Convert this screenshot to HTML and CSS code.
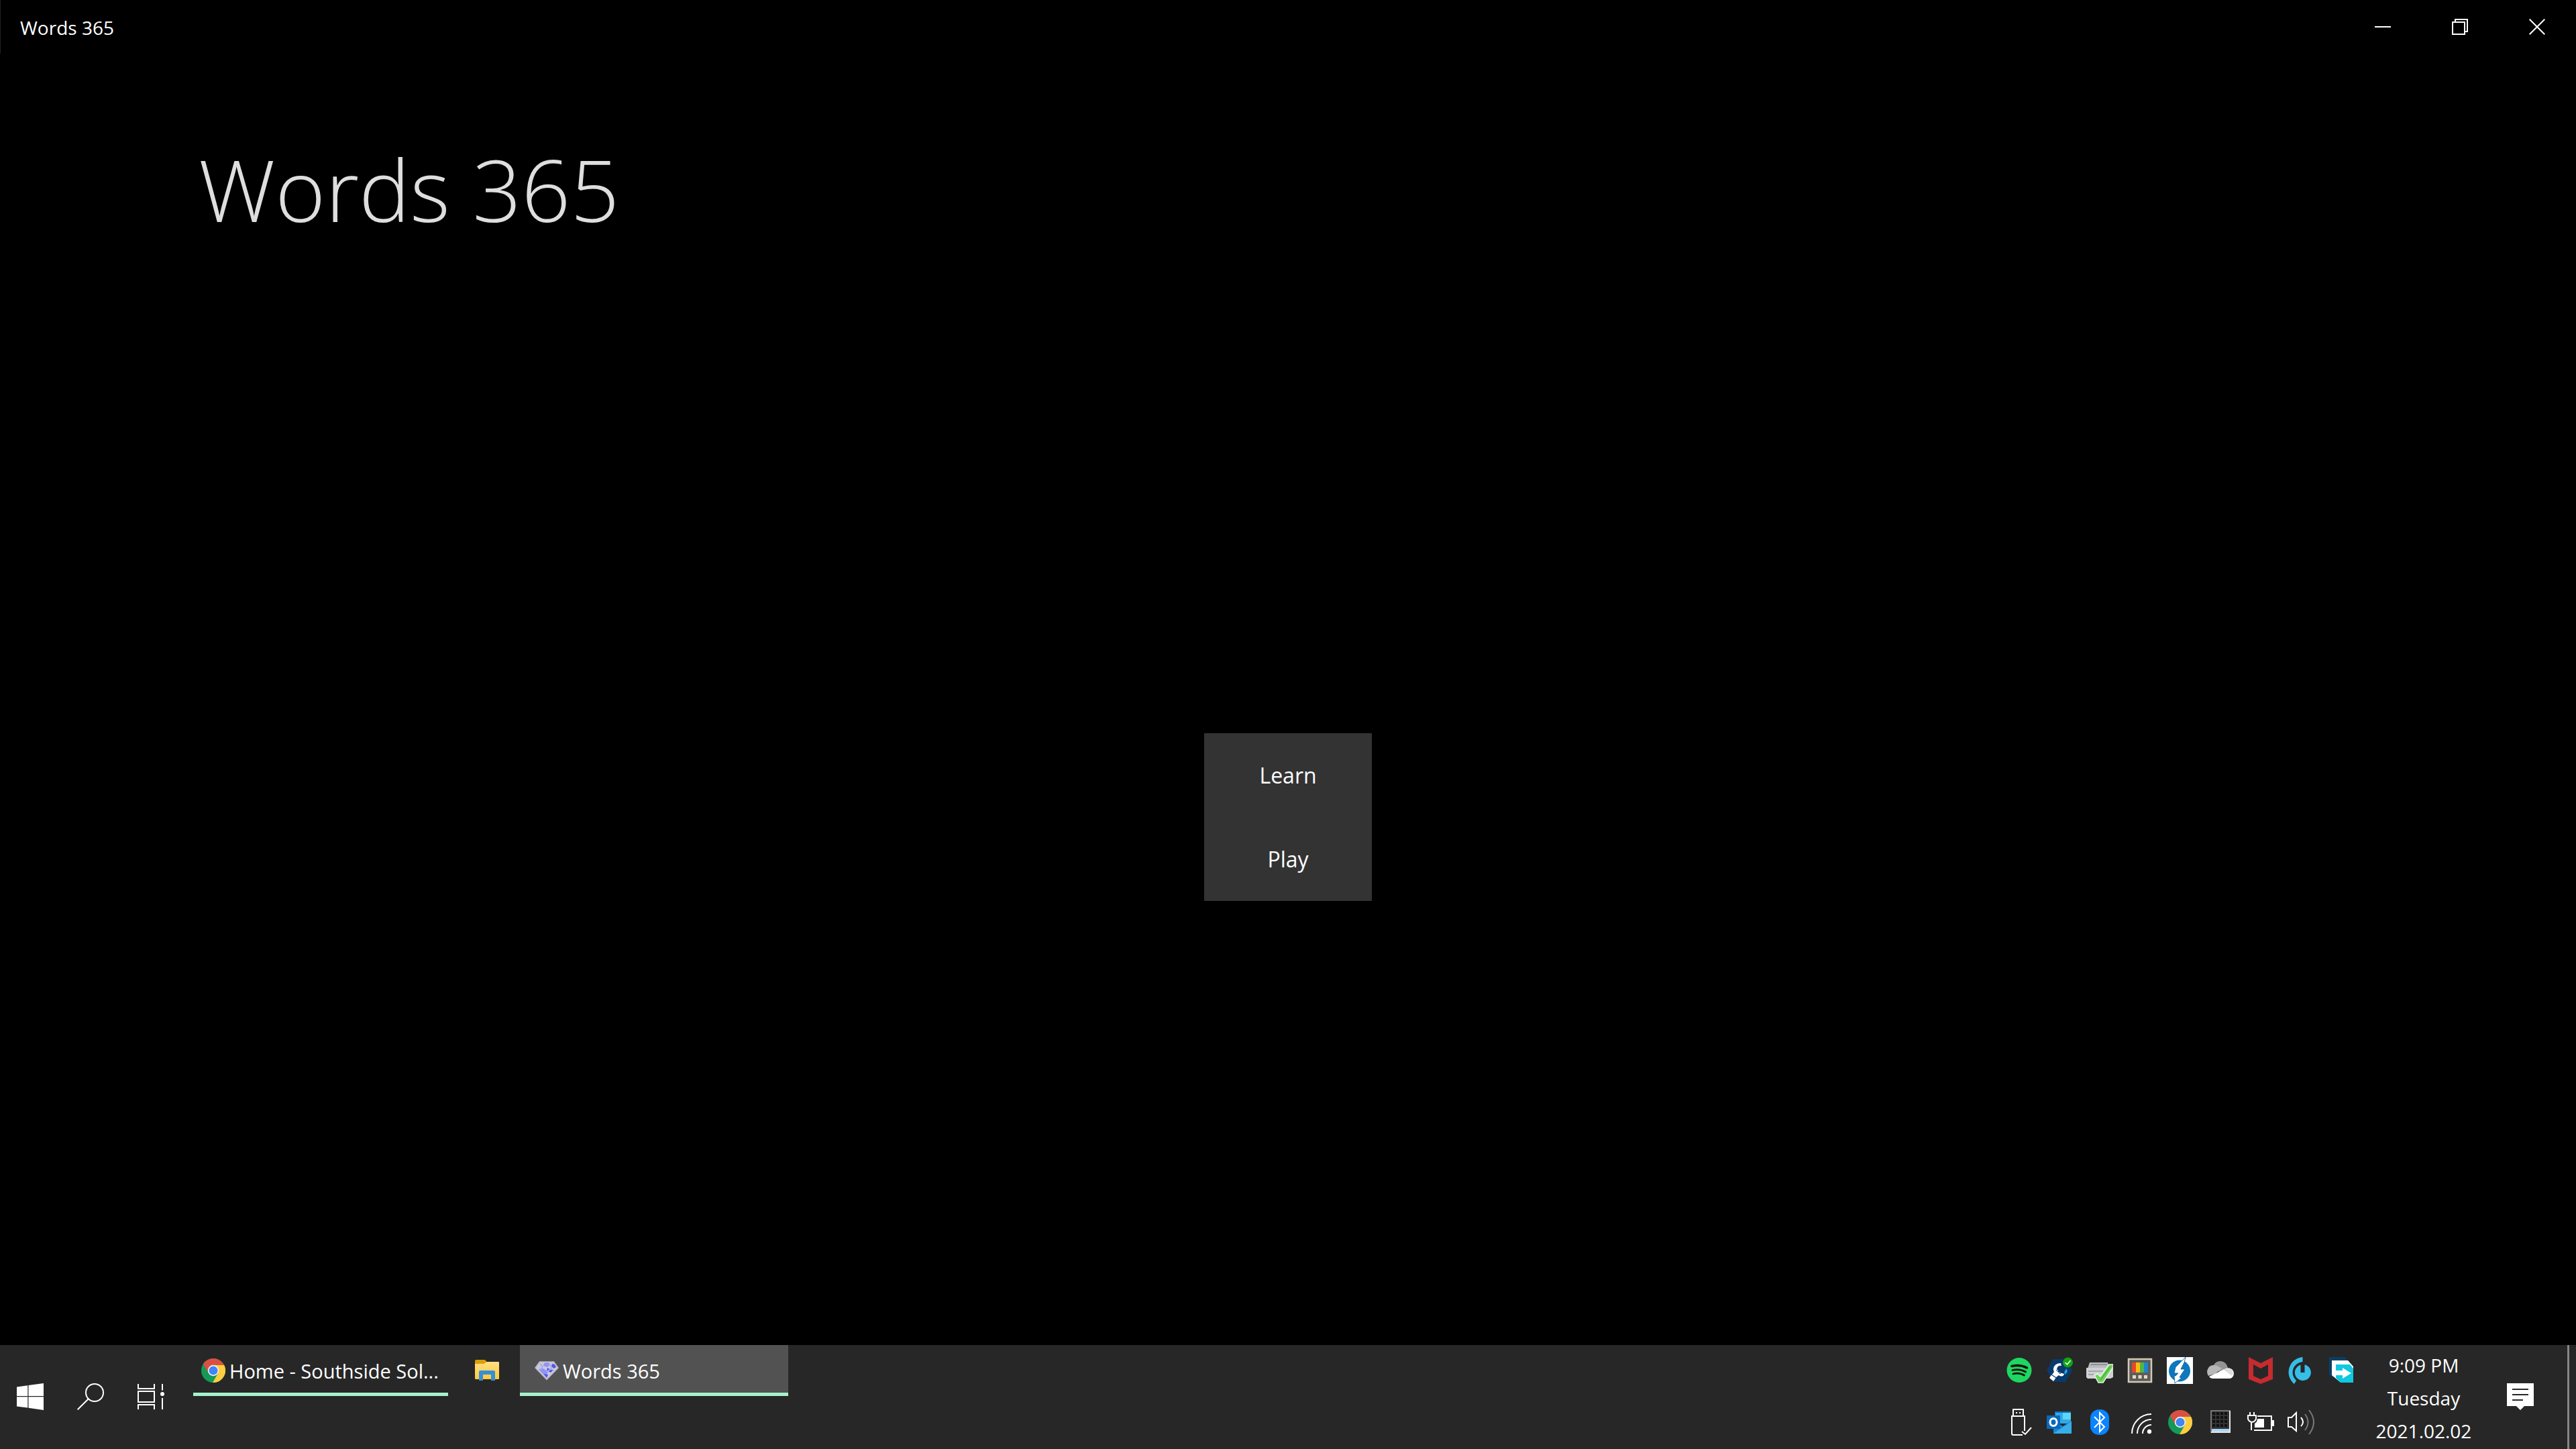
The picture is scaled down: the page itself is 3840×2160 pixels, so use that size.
FILE: index.html
```html
<!DOCTYPE html>
<html lang="en">
<head>
<meta charset="utf-8">
<title>Words 365</title>
<link rel="stylesheet" href="styles.css">
</head>
<body>
<svg class="defs" aria-hidden="true">
  <symbol id="chrome" viewBox="0 0 48 48">
    <circle cx="24" cy="24" r="24" fill="#159957"/>
    <path fill="#ffcd40" d="M24 13.1H45.4A24 24 0 0 1 22.75 48L33.4 29.45Z"/>
    <path fill="#db4f43" d="M24 13.1H45.4A24 24 0 0 0 3.9 10.9L14.56 29.45L24 24Z"/>
    <circle cx="24" cy="24" r="10.9" fill="#f1f1f1"/>
    <circle cx="24" cy="24" r="8.7" fill="#4285f4"/>
  </symbol>
</svg>

<div class="app">
  <header class="titlebar">
    <span class="titlebar-text">Words 365</span>
    <div class="caption-buttons">
      <button type="button" class="caption" aria-label="Minimize"><svg width="24" height="24" viewBox="0 0 24 24"><path d="M0 12H24" class="line"/></svg></button>
      <button type="button" class="caption" aria-label="Restore"><svg width="24" height="24" viewBox="0 0 24 24"><path d="M1 5H19V23H1ZM5 5V1H23V19H19" class="line"/></svg></button>
      <button type="button" class="caption" aria-label="Close"><svg width="24" height="24" viewBox="0 0 24 24"><path d="M.7.7L23.3 23.3M23.3.7L.7 23.3" class="line"/></svg></button>
    </div>
  </header>

  <main class="page">
    <h1 class="page-title">Words 365</h1>
    <nav class="menu">
      <div class="menu-items">
        <button type="button" class="menu-button">Learn</button>
        <button type="button" class="menu-button">Play</button>
      </div>
    </nav>
  </main>
</div>

<footer class="taskbar">
  <div class="system">
    <button type="button" class="system-button" aria-label="Start"><svg width="40" height="40" viewBox="0 0 40 40"><path fill="#fff" d="M0 5.6L16.3 3.3V18.9H0ZM17.5 3.1L40 0V18.9H17.5ZM0 20.3H16.3V36.6L0 34.4ZM17.5 20.3H40V40L17.5 36.8Z"/></svg></button>
    <button type="button" class="system-button" aria-label="Search"><svg width="40" height="40" viewBox="0 0 40 40"><circle cx="26" cy="14" r="13" class="line"/><path d="M16.8 23.2L.7 39.3" class="line"/></svg></button>
    <button type="button" class="system-button" aria-label="Task View"><svg width="40" height="40" viewBox="0 0 40 40"><path class="line" d="M1 1V8H25V1M1 12H25V28H1ZM1 39V32H25V39M37 1V10.500M37 22V39"/><circle cx="37" cy="16" r="3" fill="#fff"/></svg></button>
  </div>

  <div class="tasks">
    <button type="button" class="task open"><svg width="36" height="36"><use href="#chrome"/></svg><span>Home - Southside Sol...</span></button>
    <button type="button" class="pin" aria-label="File Explorer">
      <svg width="36" height="36" viewBox="0 0 36 36">
        <defs><linearGradient id="folder" x2="0" y2="1"><stop stop-color="#ffe083"/><stop offset="1" stop-color="#ffca3c"/></linearGradient></defs>
        <path fill="#dd9e08" d="M0 4Q0 2 2 2H14Q16 2 18 6L14 9H0Z"/>
        <path fill="url(#folder)" d="M0 8H13L18 5H35Q36 5 36 6V30Q36 31 35 31H1Q0 31 0 30Z"/>
        <path fill="#368fd6" d="M6 33V20Q6 18 8 18H28Q30 18 30 20V33H24V24H12V33Z"/>
      </svg>
    </button>
    <button type="button" class="task open active">
      <svg width="36" height="36" viewBox="0 0 36 36">
        <path fill="#c9c8e2" stroke="#b9b9c0" stroke-width="1.500" d="M7.500 5H28.500L35 14L18 31.500L1 14Z"/>
        <path fill="#8f93f4" d="M14 7Q22 5 23 9L19 13L13 11ZM6 16L13 15L20 20L18 24L12 23Z"/>
        <path fill="#4f55ee" d="M26 8L30 9L32 13L28 15L25 11ZM19 14L25 17L28 17L24 21L18 18ZM13 23L20 24L18 29Z"/>
        <path fill="none" stroke="#aaaadf" stroke-width="2" d="M8 8L12 12L9 16M20 10Q26 11 25 15L18 20"/>
      </svg>
      <span>Words 365</span>
    </button>
  </div>

  <div class="tray">
    <button type="button" class="tray-icon" aria-label="Spotify"><svg width="40" height="40" viewBox="0 0 40 40"><circle cx="20" cy="19.500" r="18.500" fill="#1ed760"/><path fill="none" stroke="#10140f" stroke-linecap="round" stroke-width="3.500" d="M9 13.500Q21 10.500 31.500 16"/><path fill="none" stroke="#10140f" stroke-linecap="round" stroke-width="2.800" d="M10 19.500Q20.500 17 29.500 22M11 25Q20 22.500 27.500 27"/></svg></button>
    <button type="button" class="tray-icon" aria-label="Support tool"><svg width="40" height="40" viewBox="0 0 40 40"><path fill="#073b6e" d="M10 3H29L39 20L29 37H11L1 20Z"/><path fill="#fff" d="M5 31L9 25L16 29L11 36Z"/><path d="M7 25L16 31" stroke="#073b6e" stroke-width="2"/><path fill="#fff" d="M22 9C13 9 9 16 12 22L9 26L15 30L19 27C23 30 27 28 27 25L20 23L16 18Q17 12 23 13Z"/><path fill="none" stroke="#073b6e" d="M15 19L18 22L21 18M18 22L21 25L24 21"/><path fill="#27a7df" d="M27 23L30 17L32 21L29 26Z"/><circle cx="32.500" cy="8" r="7.500" fill="#13a313"/><path fill="none" stroke="#fff" stroke-width="1.500" d="M28.500 8L31.500 11L36.500 5"/></svg></button>
    <button type="button" class="tray-icon" aria-label="Safely remove drive"><svg width="40" height="40" viewBox="0 0 40 40"><path fill="#b9bbbf" d="M5 8H32L35 17H2Z"/><path fill="#d0d1d5" d="M0 16H40V30L36 32H2L0 30Z"/><path fill="#a5a7ab" d="M3 20H25V22H3ZM3 25H12V27H3Z"/><path fill="#8e9095" d="M7 10H31V12H6Z"/><path fill="#6fd35a" stroke="#e8f8e5" stroke-width="1.500" d="M12 27L17 25L21 29L34 11H40V15L25 38H18Z"/><path stroke="#4bb53f" stroke-width="2" d="M21 34L36 14"/></svg></button>
    <button type="button" class="tray-icon" aria-label="PowerToys"><svg width="40" height="40" viewBox="0 0 40 40"><rect x="3" y="3" width="34" height="34" fill="#5e5d5b" stroke="#d4c9b7" stroke-width="2.500"/><path fill="#e6492a" d="M8 8H14V23H8Z"/><path fill="#fbbc12" d="M14 8H20V23H14Z"/><path fill="#4fb648" d="M20 8H26V23H20Z"/><path fill="#1d86cf" d="M26 8H32V23H26Z"/><path fill="#e2d9c9" d="M9 27H14V32H9ZM17.500 27H22.500V32H17.500ZM26 27H31V32H26Z"/></svg></button>
    <button type="button" class="tray-icon" aria-label="Thunderbolt"><svg width="40" height="40" viewBox="0 0 40 40"><path fill="#fff" d="M0 0H39V40H0Z"/><circle cx="19" cy="20.500" r="16" fill="#0c78be"/><path fill="#fff" stroke="#0a5793" stroke-width=".8" d="M28 0L13 15L11 24H17L13 28H11L12 39L22 31L19 30L27 18H21L26 8Z"/></svg></button>
    <button type="button" class="tray-icon" aria-label="OneDrive"><svg width="40" height="40" viewBox="0 0 40 40"><path fill="#959595" d="M10 12Q13 6 20 6Q29 7 31 16L20 24Z"/><path fill="#b7b7b7" d="M2 28Q0 25 0 21Q2 12 10 12Q15 12 22 17L12 25Z"/><path fill="#fff" d="M3 29L26 18Q30 15 35 17Q40 19 40 25Q39 31 34 32H9Q5 32 3 29Z"/><path fill="#dedede" d="M22 17L37 28Q40 25 38 20Q34 15 28 17L24 19Z"/></svg></button>
    <button type="button" class="tray-icon" aria-label="McAfee"><svg width="40" height="40" viewBox="0 0 40 40"><path fill="#c52b2f" fill-rule="evenodd" d="M2 0L20 9L38 0V33L20 40L2 33ZM9 11V28L20 33L31 28V11L20 17Z"/></svg></button>
    <button type="button" class="tray-icon" aria-label="Logitech G Hub"><svg width="40" height="40" viewBox="0 0 40 40"><path fill="#35bee8" d="M22.500 0V7A16 16 0 0 0 13 35L10 40A22.500 22.500 0 0 1 22.500 0Z"/><path fill="#35bee8" d="M19.500 11.500V23H25.500V11.300A12 12 0 1 1 19.500 11.500Z"/></svg></button>
    <button type="button" class="tray-icon" aria-label="File transfer"><svg width="40" height="40" viewBox="0 0 40 40"><path fill="#0a3f62" d="M2 0H25L31 6L7 31L2 26Z"/><path fill="#fff" d="M6 5H30L38 14V37H18L6 27Z"/><path fill="#10c8df" d="M12 11H33L38 17V38H19L12 31V27H22V32L35 24L22 16V20H12Z"/></svg></button>

    <button type="button" class="tray-icon" aria-label="USB device"><svg width="40" height="40" viewBox="0 0 40 40"><path class="line" d="M11 11V1H26V11M25 39H11Q9 39 9 37V11H28V33M24 34L29 38L38 28"/><path fill="#fff" d="M15 5H17V7H15ZM20 5H22V7H20Z"/></svg></button>
    <button type="button" class="tray-icon" aria-label="Outlook"><svg width="40" height="40" viewBox="0 0 40 40"><path fill="#126cb8" d="M13 4H37V16H13Z"/><path fill="#32a9e7" d="M14 6H37V22H14Z"/><path fill="#5bd5fa" d="M25 6H37V16H25Z"/><path fill="#1688d6" d="M11 18L25 26L38 18V37H11Z"/><path fill="#38aee9" d="M11 37L38 19V37Z"/><path fill="#0869bd" d="M1 10H21V30H1Z"/><ellipse cx="11" cy="20" rx="5" ry="5.500" fill="none" stroke="#fff" stroke-width="3"/></svg></button>
    <button type="button" class="tray-icon" aria-label="Bluetooth"><svg width="40" height="40" viewBox="0 0 40 40"><rect x="6" y="1" width="28" height="38" rx="13" fill="#0a84ff"/><path class="line" d="M12 12L27 27L20 34V6L27 13L12 28"/></svg></button>
    <button type="button" class="tray-icon" aria-label="Network"><svg width="40" height="40" viewBox="0 0 40 40"><path class="line" d="M8 37A29 29 0 0 1 37 8M16 37A21 21 0 0 1 37 16M24 37A13 13 0 0 1 37 24"/><circle cx="34" cy="34" r="3.200" fill="#fff"/></svg></button>
    <button type="button" class="tray-icon" aria-label="Chrome"><svg width="36" height="36"><use href="#chrome"/></svg></button>
    <button type="button" class="tray-icon" aria-label="Touch keypad"><svg width="40" height="40" viewBox="0 0 40 40"><path fill="#333" stroke="#8d8d8d" stroke-width="1.500" d="M6 3H34V35H6Z"/><path stroke="#111" stroke-width="4" stroke-dasharray="4 2" d="M8 7H32M8 13H32M8 19H32M8 25H32"/><path fill="#a7d8f5" d="M7 30H33V34H7Z"/><path fill="#e5e5e5" d="M33 3H35V36H6V34H33Z"/></svg></button>
    <button type="button" class="tray-icon" aria-label="Battery"><svg width="40" height="40" viewBox="0 0 40 40"><path class="line" d="M15 11H36V32H10M4 5V10M10 5V10M1 10H13V15Q12 19 7 20Q2 19 1 15ZM6 20V32"/><path fill="#fff" d="M15 15H25V28H11V22Q15 20 15 15ZM37 17H40V26H37Z"/></svg></button>
    <button type="button" class="tray-icon" aria-label="Volume"><svg width="40" height="40" viewBox="0 0 40 40"><path class="line" d="M1 13H6L13 6V33L6 27H1ZM20 13Q26 20 20 26"/><path fill="none" stroke="#777" stroke-width="2" d="M26 8Q35 20 26 32M32 2Q46 20 32 38"/></svg></button>
  </div>

  <button type="button" class="clock"><span>9:09 PM</span><span>Tuesday</span><span>2021.02.02</span></button>
  <button type="button" class="notices" aria-label="Notifications"><svg width="40" height="40" viewBox="0 0 40 40"><path fill="#fff" d="M0 0H40V34H26L20 40L14 34H0Z"/><path stroke="#272727" stroke-width="2" d="M8 9H32M8 17H32M8 25H24"/></svg></button>
  <button type="button" class="show-desktop" aria-label="Show desktop"></button>
</footer>
</body>
</html>
```
FILE: styles.css
```css
* {
  box-sizing: border-box;
}

body {
  margin: 0;
  min-height: 100vh;
  display: flex;
  flex-direction: column;
  background: #000;
  color: #fff;
  font-family: "Open Sans", "Noto Sans", sans-serif;
  font-size: 28px;
}

button {
  margin: 0;
  padding: 0;
  border: 0;
  background: none;
  color: inherit;
  font: inherit;
}

svg {
  display: block;
  flex: none;
}

.defs {
  display: none;
}

.line {
  fill: none;
  stroke: #fff;
  stroke-width: 2;
}

.app {
  flex: 1;
  display: flex;
  flex-direction: column;
}

.titlebar {
  display: flex;
  justify-content: space-between;
  height: 80px;
  padding-left: 29px;
  border-left: 1px solid #222;
}

.titlebar-text {
  line-height: 82px;
}

.caption-buttons {
  display: flex;
}

.caption {
  display: grid;
  place-items: center;
  width: 115px;
  padding-right: 1px;
}

.page {
  flex: 1;
  display: flex;
  flex-direction: column;
}

.page-title {
  margin: 0;
  padding: 102px 296px 48px;
  color: #dedede;
  font-size: 128px;
  font-weight: 300;
  line-height: 200px;
}

.menu {
  flex: 1;
  display: grid;
  place-items: center;
}

.menu-items {
  display: flex;
  flex-direction: column;
  width: 250px;
}

.menu-button {
  height: 125px;
  background: #333;
  font-size: 32px;
}

.taskbar {
  display: flex;
  height: 155px;
  background: #272727;
}

.system {
  display: flex;
  padding-right: 18px;
}

.system-button {
  display: grid;
  place-items: center;
  width: 90px;
  padding-bottom: 1px;
}

.tasks {
  flex: 1;
  display: flex;
  align-items: flex-start;
}

.task {
  display: flex;
  align-items: center;
  gap: 6px;
  width: 380px;
  height: 76px;
  padding-left: 12px;
  border-bottom: 5px solid #a6f2cd;
  font-size: 29px;
  white-space: nowrap;
}

.task svg {
  margin-top: 4px;
}

.task span {
  margin-top: 6px;
}

.pin {
  display: grid;
  place-items: center;
  width: 107px;
  height: 76px;
  padding-left: 9px;
}

.task.active {
  width: 400px;
  padding-left: 22px;
  background: #525252;
}

.tray {
  display: grid;
  grid-template-columns: repeat(9, 60px);
  grid-template-rows: 76px 78px;
}

.tray-icon {
  display: grid;
  place-items: center;
}

.clock {
  display: flex;
  flex-direction: column;
  width: 186px;
  padding-top: 6px;
  line-height: 49px;
  text-align: center;
}

.notices {
  display: grid;
  place-items: center;
  width: 121px;
  padding: 0 20px 1px 1px;
}

.show-desktop {
  width: 13px;
  border-left: 3px solid #858585;
}
```
